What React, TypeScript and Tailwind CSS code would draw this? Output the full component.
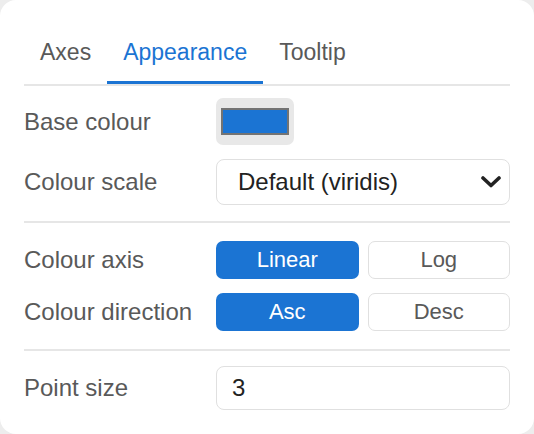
import React from 'react';

const BLUE = 'bg-[#1b74d3]';

function Divider() {
  return <div className="h-[2px] bg-[#e6e6e6]" />;
}

function Label({ children }: { children: React.ReactNode }) {
  return <div className="text-[24px] leading-[28px] text-[#595959]">{children}</div>;
}

function Toggle({ options, active }: { options: string[]; active: number }) {
  return (
    <div className="grid grid-cols-2 gap-[9px]">
      {options.map((o, i) =>
        i === active ? (
          <button
            key={o}
            className={`h-[38px] rounded-[7px] ${BLUE} text-white text-[22px] leading-[26px]`}
          >
            {o}
          </button>
        ) : (
          <button
            key={o}
            className="h-[38px] rounded-[7px] border-[1.5px] border-[#e0e0e0] bg-white text-[#595959] text-[22px] leading-[26px]"
          >
            {o}
          </button>
        )
      )}
    </div>
  );
}

export default function App() {
  const tabs = ['Axes', 'Appearance', 'Tooltip'];

  return (
    <div className="w-[534px] h-[434px] bg-[#ededed] font-['Liberation_Sans',Arial,sans-serif]">
      <div className="w-full h-full rounded-[16px] bg-white px-6 pt-6">
        {/* Tabs */}
        <div className="flex border-b-2 border-[#e6e6e6]">
          {tabs.map((t) =>
            t === 'Appearance' ? (
              <div
                key={t}
                className="px-4 pt-[15px] pb-[16px] border-b-[3px] border-[#1b74d3] text-[23px] leading-[26px] text-[#1b74d3]"
              >
                {t}
              </div>
            ) : (
              <div
                key={t}
                className="px-4 pt-[15px] pb-[16px] border-b-[3px] border-transparent text-[23px] leading-[26px] text-[#595959]"
              >
                {t}
              </div>
            )
          )}
        </div>

        {/* Base colour / scale */}
        <div className="grid grid-cols-[192px_1fr] items-center gap-y-[14px] pt-[12px] pb-[16px]">
          <Label>Base colour</Label>
          <div>
            <div className="w-[78px] h-[47px] rounded-[7px] bg-[#e8e8e8] pl-[5px] pt-[10px]">
              <div className="w-[68px] h-[27px] border-2 border-[#737373] bg-[#1b74d3]" />
            </div>
          </div>
          <Label>Colour scale</Label>
          <div className="h-[46px] rounded-[8px] border-[1.5px] border-[#e0e0e0] flex items-center justify-between pl-[21px] pr-[8px]">
            <span className="text-[24px] leading-[28px] text-[#222]">Default (viridis)</span>
            <svg width="20" height="12" viewBox="0 0 20 12">
              <polyline points="2,2 10,9.5 18,2" fill="none" stroke="#222" strokeWidth="3.6" strokeLinecap="round" strokeLinejoin="round" />
            </svg>
          </div>
        </div>

        <Divider />

        {/* Colour axis / direction */}
        <div className="grid grid-cols-[192px_1fr] items-center gap-y-[14px] pt-[18px] pb-[18px]">
          <Label>Colour axis</Label>
          <Toggle options={['Linear', 'Log']} active={0} />
          <Label>Colour direction</Label>
          <Toggle options={['Asc', 'Desc']} active={0} />
        </div>

        <Divider />

        {/* Point size */}
        <div className="grid grid-cols-[192px_1fr] items-center pt-[15px]">
          <Label>Point size</Label>
          <div className="h-[44px] rounded-[8px] border-[1.5px] border-[#e0e0e0] flex items-center pl-[15px]">
            <span className="text-[24px] leading-[28px] text-[#222]">3</span>
          </div>
        </div>
      </div>
    </div>
  );
}
